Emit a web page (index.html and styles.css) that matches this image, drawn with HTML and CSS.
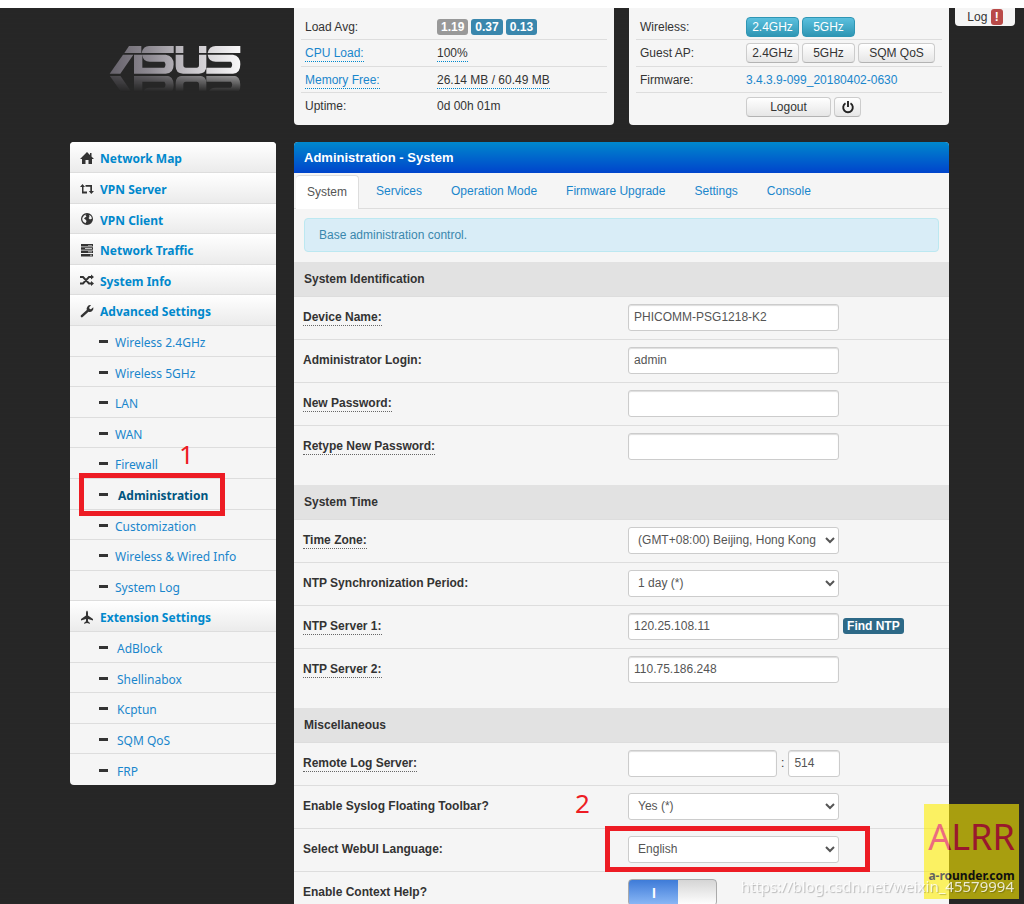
FILE: index.html
```html
<!DOCTYPE html>
<html lang="en">
<head>
<meta charset="utf-8">
<title>Administration - System</title>
<link rel="stylesheet" href="styles.css">
</head>
<body>
<svg class="defs" aria-hidden="true">
  <defs>
    <linearGradient id="metal" gradientUnits="userSpaceOnUse" x1="60" y1="0" x2="452" y2="0">
      <stop offset="0" stop-color="#65616a"/><stop offset=".3" stop-color="#8d8991"/><stop offset=".6" stop-color="#c5c2c7"/><stop offset="1" stop-color="#f8f7f8"/>
    </linearGradient>
    <linearGradient id="fade" gradientUnits="userSpaceOnUse" x1="0" y1="228" x2="0" y2="276">
      <stop offset="0" stop-color="#fff" stop-opacity=".55"/><stop offset="1" stop-color="#fff" stop-opacity="0"/>
    </linearGradient>
    <mask id="fadeMask" maskUnits="userSpaceOnUse" x="50" y="228" width="420" height="50"><rect x="50" y="228" width="420" height="48" fill="url(#fade)"/></mask>
  </defs>
</svg>
<button class="log" type="button">Log <span class="log-badge">!</span></button>
<div class="page">
  <header class="top">
    <svg class="logo" viewBox="55 130 405 150" role="img" aria-label="ASUS">
      <g id="mark" fill="url(#metal)">
        <path d="M118 139H155V160H104Z"/>
        <path d="M100 165H131L92 222H60Z"/>
        <path d="M156 160Q160 139 178 139H252V160Z"/>
        <path d="M133 165H228Q252 168 252 194Q252 222 228 222H133ZM158 165Q160 186 180 186H224Q231 195 224 204H158Z" fill-rule="evenodd"/>
        <path d="M258 139H281V160H258ZM258 165H281V196Q281 204 289 204H321Q328 204 328 196V165H350V200Q350 222 328 222H280Q258 222 258 200Z"/>
        <path d="M328 139H350V160H328Z"/>
        <path d="M354 160Q358 139 378 139H452V160Z"/>
        <path d="M354 165H430Q452 168 452 194Q452 222 430 222H350V204H424Q431 195 424 186H378Q357 186 354 165Z"/>
      </g>
      <g mask="url(#fadeMask)"><use href="#mark" transform="matrix(1 0 0 -1 0 450)"/></g>
    </svg>
    <section class="card status">
      <div class="line"><span>Load Avg:</span><span class="badges"><b class="badge grey">1.19</b><b class="badge">0.37</b><b class="badge">0.13</b></span></div>
      <div class="line"><span><a class="dotted" href="#">CPU Load:</a></span><span><span class="dotted">100%</span></span></div>
      <div class="line"><span><a class="dotted" href="#">Memory Free:</a></span><span><span class="dotted">26.14 MB / 60.49 MB</span></span></div>
      <div class="line"><span>Uptime:</span><span>0d 00h 01m</span></div>
    </section>
    <section class="card radio">
      <div class="line"><span>Wireless:</span><span class="btns"><button class="btn info">2.4GHz</button><button class="btn info">5GHz</button></span></div>
      <div class="line"><span>Guest AP:</span><span class="btns"><button class="btn">2.4GHz</button><button class="btn">5GHz</button><button class="btn wide">SQM QoS</button></span></div>
      <div class="line"><span>Firmware:</span><span><a href="#">3.4.3.9-099_20180402-0630</a></span></div>
      <div class="line last"><span></span><span class="btns"><button class="btn logout">Logout</button><button class="btn power" aria-label="Reboot"><svg viewBox="0 0 14 14"><path d="M4.500 3.300A4.800 4.800 0 1 0 9.500 3.300M7 1V7" fill="none" stroke="#222" stroke-width="1.900"/></svg></button></span></div>
    </section>
  </header>
  <div class="body">
    <nav>
      <ul class="menu">
        <li class="head"><svg viewBox="0 0 14 14"><path d="M7 1 0 8H2V13H5.500V9H8.500V13H12V8H14L11.500 5.500V2H10V4Z"/></svg><a href="#">Network Map</a></li>
        <li class="head"><svg viewBox="0 0 14 14"><path d="M0 5 2.500 2 5 5H3.500V9.500H7V11.500H2V5ZM5.500 3H12V9H14L11.300 12 8.800 9H10.300V4.700H5.500Z"/></svg><a href="#">VPN Server</a></li>
        <li class="head"><svg viewBox="0 0 14 14"><path fill-rule="evenodd" d="M7 1A6 6 0 1 1 7 13A6 6 0 1 1 7 1ZM6.500 2.200 5.500 3.500 6.500 4.500 5 5.500 4 6.500 6 8 6.500 9.200 5.500 11.200A5 5 0 0 1 2.300 6L4 3.500ZM9 3 11 4 12 6.500 10 7.500 8.500 6 9.500 5Z"/></svg><a href="#">VPN Client</a></li>
        <li class="head"><svg viewBox="0 0 14 14"><path fill-rule="evenodd" d="M1 1H13V3.500H1ZM1 4.300H13V6.800H1ZM1 7.600H13V10.100H1ZM1 10.900H13V13.400H1ZM8 1.900V2.600H12V1.900ZM5 5.200V5.900H12V5.200ZM8 8.500V9.200H12V8.500ZM10 11.800V12.500H12V11.800Z"/></svg><a href="#">Network Traffic</a></li>
        <li class="head"><svg viewBox="0 0 14 14"><path d="M0 4H3L9 10.500H11.500M0 10.500H3L9 4H11.500" fill="none" stroke="#333" stroke-width="1.900"/><path d="M11 1.500 14 4 11 6.500ZM11 8 14 10.500 11 13Z"/></svg><a href="#">System Info</a></li>
        <li class="head"><svg viewBox="0 0 14 14"><path d="M1 11.300 6.800 6A3.700 3.700 0 0 1 11 1.200L9.200 3.300 9.600 4.900 11 5.200 13.300 3.300A3.700 3.700 0 0 1 8.500 7.700L2.700 13A1.200 1.200 0 0 1 1 11.300Z"/></svg><a href="#">Advanced Settings</a></li>
        <li><i></i><a href="#">Wireless 2.4GHz</a></li>
        <li><i></i><a href="#">Wireless 5GHz</a></li>
        <li><i></i><a href="#">LAN</a></li>
        <li><i></i><a href="#">WAN</a></li>
        <li><i></i><a href="#">Firewall</a><span class="note note-one">1</span></li>
        <li class="active"><i></i><a href="#">Administration</a><span class="frame frame-menu"></span></li>
        <li><i></i><a href="#">Customization</a></li>
        <li><i></i><a href="#">Wireless &amp; Wired Info</a></li>
        <li><i></i><a href="#">System Log</a></li>
        <li class="head"><svg viewBox="0 0 14 14"><path d="M7 .5Q8 1 8 3V5.500L13 9V10.500L8 9V11.200L10 13V13.700L7 13 4 13.700V13L6 11.200V9L1 10.500V9L6 5.500V3Q6 1 7 .5Z"/></svg><a href="#">Extension Settings</a></li>
        <li class="ext"><i></i><a href="#">AdBlock</a></li>
        <li class="ext"><i></i><a href="#">Shellinabox</a></li>
        <li class="ext"><i></i><a href="#">Kcptun</a></li>
        <li class="ext"><i></i><a href="#">SQM QoS</a></li>
        <li class="ext"><i></i><a href="#">FRP</a></li>
      </ul>
    </nav>
    <main class="panel">
      <h1>Administration - System</h1>
      <nav class="tabs"><a class="on" href="#">System</a><a href="#">Services</a><a href="#">Operation Mode</a><a href="#">Firmware Upgrade</a><a href="#">Settings</a><a href="#">Console</a></nav>
      <p class="alert">Base administration control.</p>
      <form>
        <section class="group">
          <h2>System Identification</h2>
          <div class="row"><label for="dev"><span class="dotted">Device Name:</span></label><input id="dev" type="text" value="PHICOMM-PSG1218-K2"></div>
          <div class="row"><label for="login">Administrator Login:</label><input id="login" type="text" value="admin"></div>
          <div class="row"><label for="pw"><span class="dotted">New Password:</span></label><input id="pw" type="password"></div>
          <div class="row"><label for="pw2"><span class="dotted">Retype New Password:</span></label><input id="pw2" type="password"></div>
        </section>
        <section class="group">
          <h2>System Time</h2>
          <div class="row"><label for="tz"><span class="dotted">Time Zone:</span></label><select id="tz"><option>(GMT+08:00) Beijing, Hong Kong</option></select></div>
          <div class="row"><label for="per">NTP Synchronization Period:</label><select id="per"><option>1 day (*)</option></select></div>
          <div class="row"><label for="ntp1"><span class="dotted">NTP Server 1:</span></label><div class="fields"><input id="ntp1" type="text" value="120.25.108.11"><a class="find" href="#">Find NTP</a></div></div>
          <div class="row"><label for="ntp2"><span class="dotted">NTP Server 2:</span></label><input id="ntp2" type="text" value="110.75.186.248"></div>
        </section>
        <section class="group">
          <h2>Miscellaneous</h2>
          <div class="row"><label for="rls"><span class="dotted">Remote Log Server:</span></label><div class="fields"><input id="rls" class="host" type="text"><span>:</span><input class="port" type="text" value="514" aria-label="Port"></div></div>
          <div class="row"><label for="bar">Enable Syslog Floating Toolbar?</label><select id="bar"><option>Yes (*)</option></select><span class="note note-two">2</span></div>
          <div class="row"><label for="lang">Select WebUI Language:</label><select id="lang"><option>English</option></select><span class="frame frame-lang"></span></div>
          <div class="row"><label for="help">Enable Context Help?</label><input id="help" class="toggle" type="checkbox" checked></div>
        </section>
      </form>
    </main>
  </div>
</div>
<div class="stamp"><span class="stamp-name">ALRR</span><span class="stamp-site">a-rounder.com</span></div>
<div class="watermark">https://blog.csdn.net/weixin_45579994</div>
</body>
</html>
```
FILE: styles.css
```css
* { box-sizing: border-box; }
html { scrollbar-width: none; background: #272727; }
body {
  margin: 0;
  border-top: 8px solid #fff;
  font: 12px/20px "Liberation Sans", Arial, sans-serif;
  color: #333;
  background: repeating-linear-gradient(0deg, #262626 0 2px, #272727 2px 3px, #262626 3px 5px);
}
a { color: #1a86cc; text-decoration: none; }
button, input, select { font: inherit; color: #555; margin: 0; }
.defs { position: absolute; width: 0; height: 0; }
.page { padding: 0 75px 0 70px; }
.top { display: grid; grid-template-columns: 209px 1fr 1fr; column-gap: 15px; height: 117px; }
.logo { width: 135px; height: 50px; margin: 35px 0 0 38px; }
.card { padding: 6px 7px 0; background: #f5f5f5; border-radius: 0 0 4px 4px; }
.line { display: grid; align-items: center; height: 27px; padding: 0 4px; border-bottom: 1px solid #ddd; }
.line:nth-child(1), .line:nth-child(3) { height: 26px; }
.line:last-child { height: 28px; border: 0; }
.status .line { grid-template-columns: 132px 1fr; }
.status .line:last-child { height: 26px; }
.radio .line { grid-template-columns: 106px 1fr; }
.dotted { border-bottom: 1px dotted #666; }
.card .dotted { border-color: #08c; display: inline-block; line-height: 15px; }
.badges, .btns { display: flex; gap: 3px; }
.badge { padding: 0 4px; line-height: 16px; color: #fff; background: #3a87ad; border-radius: 3px; }
.badge.grey { background: #999; }
.btn {
  min-width: 53px; height: 20px; padding: 0 5px; line-height: 18px; color: #333;
  border: 1px solid #ccc; border-bottom-color: #b3b3b3; border-radius: 4px;
  background: linear-gradient(#fff, #e6e6e6);
}
.btn.info { color: #fff; border-color: #2f96b4; background: linear-gradient(#5bc0de, #2f96b4); }
.btn.wide { min-width: 77px; }
.btn.logout { min-width: 85px; }
.btn.power { min-width: 27px; display: flex; align-items: center; justify-content: center; }
.power svg { width: 14px; height: 14px; }
.log {
  position: absolute; top: 8px; right: 9px; width: 60px; height: 18px; padding: 0; line-height: 16px; color: #333;
  border: 0; border-radius: 0 0 4px 4px; background: #f5f5f5;
}
.log-badge { display: inline-block; padding: 0 4px; color: #fff; font-weight: bold; background: #b94a48; border-radius: 3px; }
.body { display: grid; grid-template-columns: 206px 1fr; column-gap: 18px; align-items: start; margin-top: 17px; }
.menu {
  list-style: none; margin: 0; padding: 0; background: #f5f5f5; border-radius: 4px;
  font: 12px/20px "Noto Sans", "Open Sans", sans-serif;
}
.menu li { position: relative; display: flex; align-items: center; height: 31px; padding: 4px 0 0 29px; border-bottom: 1px solid #ddd; }
.menu li:nth-child(5n), .menu li:nth-child(5n+3) { height: 30px; }
.menu li:last-child { border: 0; }
.menu .head { padding-left: 10px; background: linear-gradient(#fff, #ebebeb); font-weight: bold; }
.menu li:first-child { border-radius: 4px 4px 0 0; }
.menu .head a { color: #08c; }
.menu svg { width: 14px; height: 14px; margin: 0 6px 3px 0; fill: #333; }
.menu i { width: 9px; height: 3px; margin: 0 7px 3px 0; background: #333; }
.menu .ext i { margin-right: 9px; }
.menu .active i { margin-right: 10px; }
.menu .active a { color: #005580; font-weight: bold; }
.note { position: absolute; z-index: 2; color: #ed1c24; font: 26px/26px "Noto Sans", sans-serif; }
.note-one { left: 109px; top: -7px; }
.note-two { left: 281px; top: 4px; }
.frame { position: absolute; z-index: 1; border: 5px solid #ed1c24; pointer-events: none; }
.frame-menu { left: 9px; top: -6px; width: 146px; height: 43px; }
.frame-lang { left: 311px; top: -3px; width: 265px; height: 46px; }
.panel { background: #f5f5f5; border-radius: 4px 4px 0 0; }
h1 {
  margin: 0; padding: 0 10px; font: bold 13px/31px "Liberation Sans", sans-serif; color: #fff;
  background: linear-gradient(#08c, #04c); border-radius: 4px 4px 0 0;
}
.tabs { display: flex; gap: 5px; height: 36px; padding: 2px 2px 0; border-bottom: 1px solid #ddd; }
.tabs a { padding: 0 12px; line-height: 32px; }
.tabs .on { height: 34px; padding: 0 11px; color: #555; background: #fff; border: solid #ddd; border-width: 1px 1px 0 0; border-radius: 4px 4px 0 0; }
.alert { margin: 9px 10px 10px; padding: 6px 14px; color: #3a87ad; background: #d9edf7; border: 1px solid #bce8f1; border-radius: 4px; }
.group { padding-bottom: 17px; }
h2 { margin: 0; padding: 0 10px; font: bold 12px/34px "Liberation Sans", sans-serif; background: #e2e2e2; }
.row { position: relative; display: grid; grid-template-columns: 51% 1fr; align-items: center; height: 43px; padding-bottom: 2px; border-top: 1px solid #ddd; }
.row label { padding-left: 9px; font-weight: bold; }
.row label .dotted { display: inline-block; line-height: 15px; }
.row input, .row select { width: 211px; height: 27px; background: #fff; border: 1px solid #ccc; border-radius: 3px; }
.row input { padding: 0 5px; box-shadow: inset 0 1px 1px #ddd; }
.row select { padding: 0 4px 0 5px; }
.fields { display: flex; align-items: center; gap: 4px; }
.row .host { width: 149px; }
.row .port { width: 52px; }
.find { padding: 0 4px; line-height: 16px; font-weight: bold; color: #fff; background: #2d6987; border-radius: 3px; }
.row .toggle {
  appearance: none; width: 89px; height: 27px; overflow: hidden;
  border: 1px solid #aaa; border-radius: 4px; padding: 0; box-shadow: none;
  background: linear-gradient(#d5d5d5, #fff) right / 38px 100% no-repeat, linear-gradient(#3e7bd8, #8bb8f6);
}
.toggle::before { content: "I"; display: block; width: 50px; text-align: center; font: bold 14px/26px "Liberation Sans", sans-serif; color: #fff; }
.stamp {
  position: fixed; right: 5px; bottom: 5px; z-index: 3; width: 95px; height: 95px; opacity: .6;
  display: flex; flex-direction: column; align-items: center; background: #fe0;
  font-family: "Noto Sans", sans-serif; color: #000;
}
.stamp-name { font-size: 36px; line-height: 66px; color: #e60f32; }
.stamp-site { font-size: 12px; line-height: 12px; font-weight: bold; }
.watermark {
  position: fixed; right: 10px; bottom: 8px; z-index: 4; font: 15px/20px "Noto Sans", sans-serif;
  color: rgba(255, 255, 255, .8); text-shadow: 1px 1px 1px rgba(0, 0, 0, .25);
}
```
